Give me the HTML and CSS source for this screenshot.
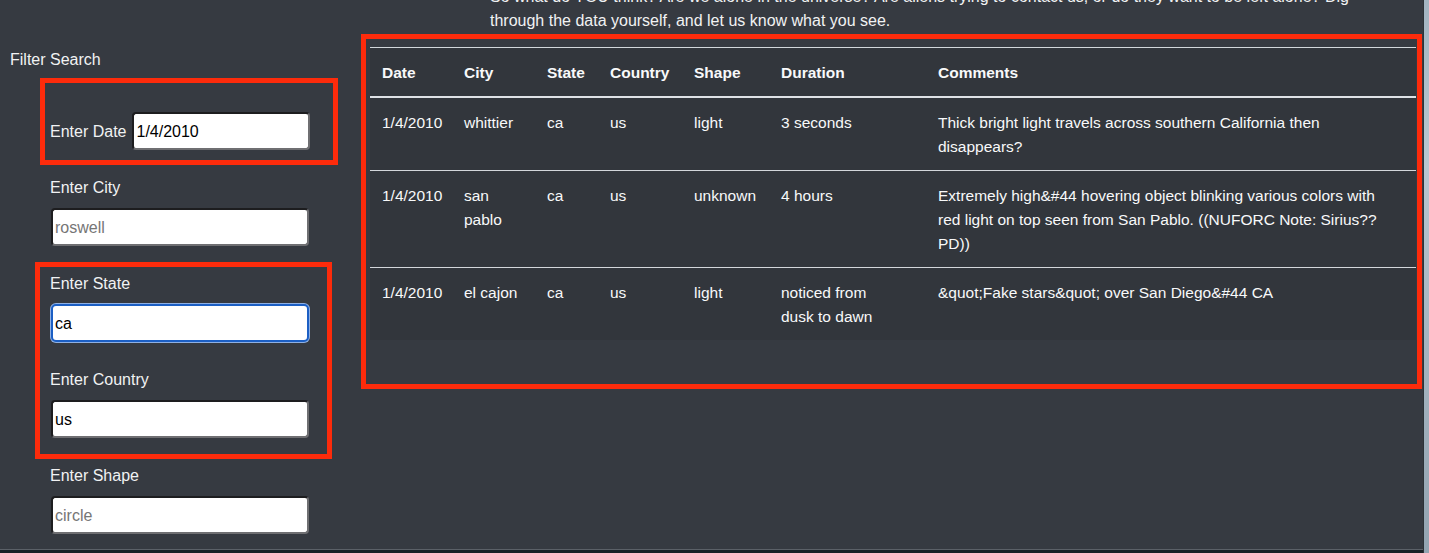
FILE: index.html
```html
<!DOCTYPE html>
<html lang="en">
<head>
<meta charset="utf-8">
<title>UFO Sightings</title>
<link rel="stylesheet" href="styles.css">
</head>
<body>
<div class="screen">
  <div class="window">
    <p class="intro">So what do YOU think? Are we alone in the universe? Are aliens trying to contact us, or do they want to be left alone? Dig through the data yourself, and let us know what you see.</p>
    <div class="content">
      <aside class="filters">
        <h6 class="filter-title">Filter Search</h6>
        <ul class="filter-list">
          <li class="filter filter-inline">
            <label class="filter-label" for="datetime">Enter Date</label>
            <input class="field field-date" id="datetime" type="text" value="1/4/2010" placeholder="1/11/2011">
          </li>
          <li class="filter">
            <label class="filter-label" for="city">Enter City</label>
            <input class="field" id="city" type="text" placeholder="roswell">
          </li>
          <li class="filter">
            <label class="filter-label" for="state">Enter State</label>
            <input class="field field-focus" id="state" type="text" value="ca" placeholder="nm">
          </li>
          <li class="filter">
            <label class="filter-label" for="country">Enter Country</label>
            <input class="field" id="country" type="text" value="us" placeholder="us">
          </li>
          <li class="filter">
            <label class="filter-label" for="shape">Enter Shape</label>
            <input class="field" id="shape" type="text" placeholder="circle">
          </li>
        </ul>
      </aside>
      <section class="results">
        <table class="ufo-table">
          <thead>
            <tr>
              <th class="c-date">Date</th>
              <th class="c-city">City</th>
              <th class="c-state">State</th>
              <th class="c-country">Country</th>
              <th class="c-shape">Shape</th>
              <th class="c-dur">Duration</th>
              <th class="c-comm">Comments</th>
            </tr>
          </thead>
          <tbody>
            <tr>
              <td>1/4/2010</td>
              <td>whittier</td>
              <td>ca</td>
              <td>us</td>
              <td>light</td>
              <td class="c-dur">3 seconds</td>
              <td class="c-comm">Thick bright light travels across southern California then disappears?</td>
            </tr>
            <tr>
              <td>1/4/2010</td>
              <td>san pablo</td>
              <td>ca</td>
              <td>us</td>
              <td>unknown</td>
              <td class="c-dur">4 hours</td>
              <td class="c-comm">Extremely high&amp;#44 hovering object blinking various colors with red light on top seen from San Pablo. ((NUFORC Note: Sirius?? PD))</td>
            </tr>
            <tr>
              <td>1/4/2010</td>
              <td>el cajon</td>
              <td>ca</td>
              <td>us</td>
              <td>light</td>
              <td class="c-dur">noticed from dusk to dawn</td>
              <td class="c-comm">&amp;quot;Fake stars&amp;quot; over San Diego&amp;#44 CA</td>
            </tr>
          </tbody>
        </table>
      </section>
    </div>
    <div class="mark mark-date"></div>
    <div class="mark mark-region"></div>
    <div class="mark mark-table"></div>
  </div>
  <div class="desktop-edge"></div>
</div>
</body>
</html>
```
FILE: styles.css
```css
* { box-sizing: border-box; }

html, body {
  margin: 0;
  padding: 0;
  background: #1a2227;
}

body {
  font-family: "Liberation Sans", Arial, sans-serif;
  font-size: 16px;
  line-height: 24px;
  color: #f4f5f6;
}

.screen {
  display: flex;
  width: 1429px;
  height: 553px;
  overflow: hidden;
}

.window {
  position: relative;
  width: 1423px;
  height: 550px;
  flex: none;
  background: #363a41;
  border-bottom: 1px solid #5b6067;
  overflow: hidden;
}

.desktop-edge {
  flex: 1;
  height: 553px;
  border-left: 1px solid #2c3238;
  background: linear-gradient(180deg, #a3b4c1 0%, #b9c6d0 30%, #a6b5c1 60%, #93a4b1 100%);
}

.intro {
  margin: -15px 0 0 490px;
  width: 905px;
  font-size: 16px;
  line-height: 24px;
  color: #f1f2f3;
}

.content {
  display: flex;
  margin-top: 14px;
}

.filters {
  width: 360px;
  flex: none;
  padding-left: 10px;
}

.filter-title {
  margin: 0;
  padding-top: 1px;
  font-size: 16px;
  line-height: 24px;
  font-weight: normal;
  color: #f1f2f3;
}

.filter-list {
  list-style: none;
  margin: 40px 0 0;
  padding: 0 0 0 40px;
  display: flex;
  flex-direction: column;
  gap: 25px;
}

.filter {
  display: flex;
  flex-direction: column;
  align-items: flex-start;
  gap: 8px;
}

.filter-inline {
  flex-direction: row;
  align-items: center;
  gap: 6px;
}

.filter-label {
  padding-top: 1px;
  font-size: 16px;
  line-height: 24px;
  color: #f1f2f3;
}

.filter-inline .filter-label {
  padding-top: 2px;
}

.field {
  width: 258px;
  height: 38px;
  margin: 0 0 0 1px;
  padding: 1px 2px 0;
  border: 2px solid;
  border-color: #1d1d1f #6f6f72 #6f6f72 #1d1d1f;
  border-radius: 4px;
  background: #fff;
  color: #000;
  font-family: "Liberation Sans", Arial, sans-serif;
  font-size: 16px;
  outline: none;
}

.field::placeholder {
  color: #767676;
}

.field-date {
  width: 178px;
  margin-left: 0;
}

.field-focus {
  border-color: #1c5fc4;
  border-radius: 5px;
  box-shadow: 0 0 0 1px #8fb0e3;
}

.results {
  margin-left: 10px;
  width: 1046px;
  flex: none;
}

.ufo-table {
  width: 1046px;
  table-layout: fixed;
  border-collapse: collapse;
  background: #32363c;
  font-size: 15.5px;
  line-height: 24px;
  color: #f8f9fa;
}

.ufo-table th,
.ufo-table td {
  padding: 13px 12px 11px;
  text-align: left;
  vertical-align: top;
  border-top: 1px solid #d3d7db;
}

.ufo-table th {
  font-weight: bold;
  border-bottom: 2px solid #dee2e6;
}

.c-date { width: 82px; }
.c-city { width: 83px; }
.c-state { width: 63px; }
.c-country { width: 84px; }
.c-shape { width: 87px; }
.c-dur { width: 157px; }
.c-comm { width: 490px; }

.ufo-table td.c-dur { padding-right: 36px; }
.ufo-table td.c-comm { padding-right: 16px; }

.mark {
  position: absolute;
  border: 5px solid #fd2b0b;
  pointer-events: none;
}

.mark-date {
  left: 40px;
  top: 78px;
  width: 298px;
  height: 87px;
}

.mark-region {
  left: 35px;
  top: 262px;
  width: 297px;
  height: 197px;
}

.mark-table {
  left: 361px;
  top: 34px;
  width: 1061px;
  height: 355px;
}
```
